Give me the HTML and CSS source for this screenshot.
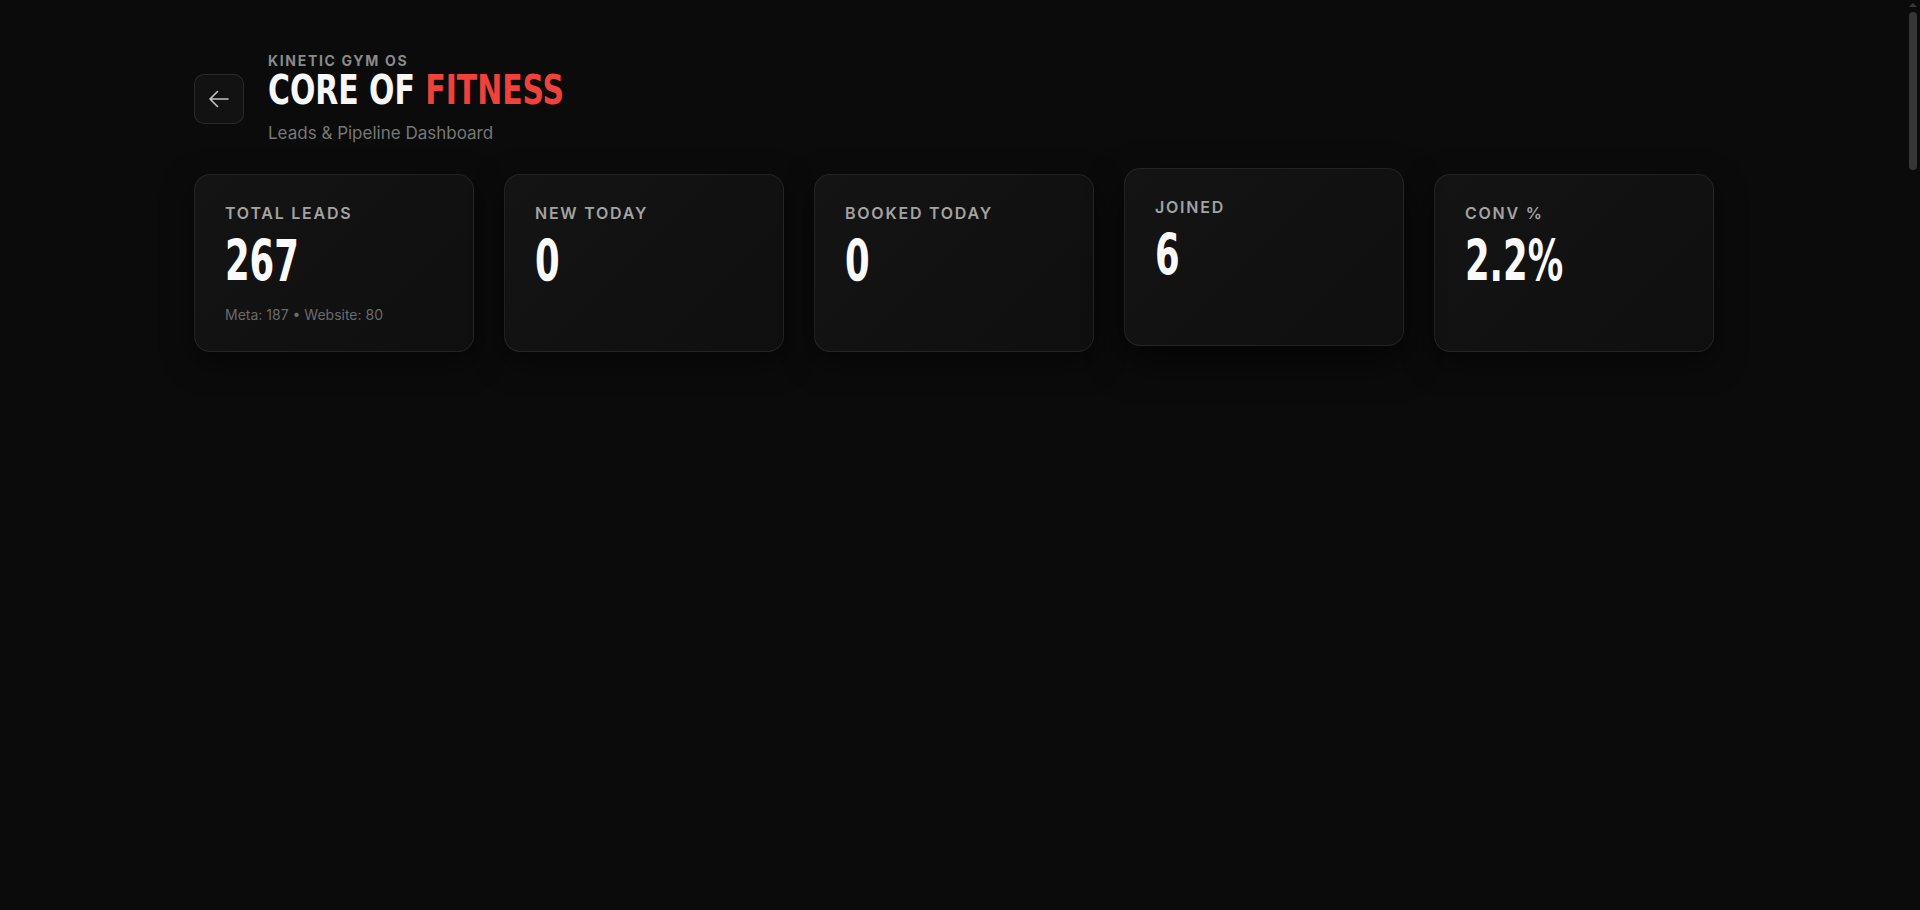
FILE: index.html
```html
<!DOCTYPE html>
<html lang="en">
<head>
	<meta charset="UTF-8">
	<title>Core of Fitness - Leads</title>
	<link rel="stylesheet" href="styles.css">
</head>
<body>
	<div class="page">
		<div class="header">
			<a href="#" class="back">
				<svg width="24" height="24" viewBox="0 0 24 24" fill="none" stroke="currentColor" stroke-width="1.6" stroke-linecap="round" stroke-linejoin="round"><path d="M10.5 19.5 3 12l7.5-7.5M3 12h18"/></svg>
			</a>
			<div class="titles">
				<div class="kicker">Kinetic Gym OS</div>
				<h1 class="title"><span class="squeeze">Core of <em>Fitness</em></span></h1>
				<div class="sub">Leads &amp; Pipeline Dashboard</div>
			</div>
		</div>
		<div class="stats">
			<div class="card">
				<div class="label">Total Leads</div>
				<div class="num"><span>267</span></div>
				<div class="meta">Meta: 187 &bull; Website: 80</div>
			</div>
			<div class="card">
				<div class="label">New Today</div>
				<div class="num"><span>0</span></div>
			</div>
			<div class="card">
				<div class="label">Booked Today</div>
				<div class="num"><span>0</span></div>
			</div>
			<div class="card lift">
				<div class="label">Joined</div>
				<div class="num"><span>6</span></div>
			</div>
			<div class="card">
				<div class="label">Conv %</div>
				<div class="num"><span>2.2%</span></div>
			</div>
		</div>
	</div>
	<!-- dark scrollbar like the browser one -->
	<div class="scrollbar" aria-hidden="true">
		<div class="scroll-up"></div>
		<div class="thumb"></div>
	</div>
</body>
</html>
```

FILE: styles.css
```css
*{
	margin:0;
	padding:0;
	box-sizing:border-box;
	text-decoration:none;
}
html{
	color-scheme:dark;
	background:#0b0b0b;
}
body{
	background:#0b0b0b;
	color:#f5f5f5;
	font-family:Inter, "Noto Sans", sans-serif;
	min-height:4950px;
}
.page{
	max-width:1532px;
	margin:0 auto;
	padding:52px 12px 0 0;
}
.header{
	display:flex;
	align-items:center;
	gap:24px;
	margin-bottom:29px;
}
.back{
	width:50px;
	height:50px;
	border:1px solid rgba(255,255,255,0.1);
	border-radius:10px;
	background:#121212;
	color:#c4c4c4;
	display:flex;
	align-items:center;
	justify-content:center;
}
.kicker{
	font-size:14px;
	line-height:18px;
	font-weight:700;
	letter-spacing:0.12em;
	text-transform:uppercase;
	color:#8a8a8a;
}
.title{
	font-family:"DejaVu Sans Condensed", "DejaVu Sans", sans-serif;
	font-size:40px;
	line-height:40px;
	font-weight:700;
	text-transform:uppercase;
	color:#f7f7f7;
	white-space:nowrap;
}
.squeeze{
	display:inline-block;
	transform:scaleX(0.83);
	transform-origin:left;
}
.title em{
	font-style:normal;
	color:#f0413a;
}
.sub{
	margin-top:11px;
	font-size:17px;
	line-height:24px;
	color:#777;
}
.stats{
	display:grid;
	grid-template-columns:repeat(5, 1fr);
	gap:30px;
}
.card{
	border:1px solid rgba(255,255,255,0.08);
	border-radius:16px;
	background:linear-gradient(135deg, #141414, #0f0f0f);
	box-shadow:0 10px 30px rgba(0,0,0,0.5);
	padding:26px 30px;
}
.card.lift{
	transform:translateY(-6px);
	box-shadow:0 16px 36px rgba(0,0,0,0.6);
}
.label{
	font-size:16px;
	line-height:24px;
	font-weight:600;
	letter-spacing:0.11em;
	text-transform:uppercase;
	color:#a3a3a3;
}
.num{
	margin-top:8px;
	font-family:"DejaVu Sans Condensed", "DejaVu Sans", sans-serif;
	font-size:57px;
	line-height:56px;
	font-weight:700;
	color:#fafafa;
	white-space:nowrap;
}
.num span{
	display:inline-block;
	transform:scaleX(0.69);
	transform-origin:left;
}
.meta{
	margin-top:16px;
	font-size:14px;
	line-height:20px;
	color:#6b6b6b;
}
.scrollbar{
	position:fixed;
	top:0;
	right:0;
	width:15px;
	height:100%;
	background:#0b0b0b;
}
.scroll-up{
	width:0;
	height:0;
	margin:3px auto 0;
	border-left:4px solid transparent;
	border-right:4px solid transparent;
	border-bottom:4px solid #3a3a3a;
}
.thumb{
	width:8px;
	height:158px;
	margin:5px auto 0;
	border-radius:4px;
	background:#363636;
}
```
